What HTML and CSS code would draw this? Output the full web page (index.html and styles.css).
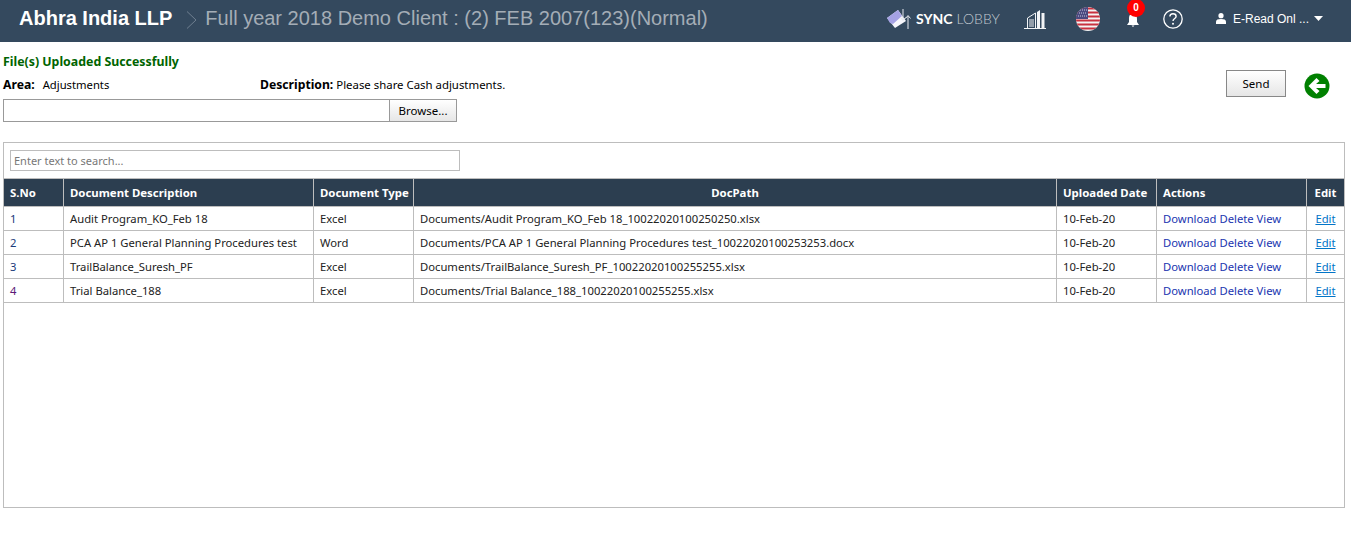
FILE: index.html
```html
<!DOCTYPE html>
<html lang="en">
<head>
<meta charset="utf-8">
<title>Documents</title>
<link rel="stylesheet" href="styles.css">
</head>
<body>
<header class="topbar">
  <div class="crumbs">
    <span class="firm">Abhra India LLP</span>
    <svg class="chev" width="12" height="20" viewBox="0 0 12 20"><path d="M1 1.500 L10 10 L1 18.500" fill="none" stroke="#6f7f90" stroke-width="1"/></svg>
    <span class="client">Full year 2018 Demo Client : (2) FEB 2007(123)(Normal)</span>
  </div>
  <div class="tools">
    <div class="sync">
      <svg width="26" height="20" viewBox="0 0 26 20"><path d="M0 9 L11 1 L19 12 L8 19 Z" fill="#f6f6fb"/><path d="M0 9 L11 1 L15 7 L6 15 L3 14 Z" fill="#a5a2e4"/><path d="M16 0 V11 M13.500 8.500 L16 11.500 L18.500 8.500 M21 20 V7 M18.500 9.500 L21 6.500 L23.500 9.500" fill="none" stroke="#e4e8ee" stroke-width="1"/></svg>
      <span class="sync-a">SYNC</span><span class="sync-b">LOBBY</span>
    </div>
    <svg class="city" width="24" height="20" viewBox="0 0 24 20"><g fill="none" stroke="#f2f4f6" stroke-width="1"><path d="M1 19.500 H23"/><path d="M4.500 19 V9 L12.500 4 V19"/><path d="M6 11 H11 M6 13 H11 M6 15 H11 M6 17 H11"/></g><path d="M14 3 L17 1 V19 H14 Z M18.500 4 H21.500 V19 H18.500 Z" fill="#f2f4f6"/></svg>
    <svg class="flag" width="24" height="24" viewBox="0 0 24 24"><defs><clipPath id="round"><circle cx="12" cy="12" r="12"/></clipPath></defs><g clip-path="url(#round)"><rect width="24" height="24" fill="#f4f4f4"/><path d="M0 1.500 H24 M0 5.500 H24 M0 9.500 H24 M0 13.500 H24 M0 17.500 H24 M0 21.500 H24" stroke="#c8313f" stroke-width="2"/><rect width="12" height="12" fill="#4a4a80"/><path d="M2 3 H11 M3 6 H11 M2 9 H11" stroke="#c9c9e0" stroke-width="1" stroke-dasharray="1 1"/></g></svg>
    <div class="bell">
      <svg width="14" height="14" viewBox="0 0 14 14"><path d="M7 0 C10 0 11 3 11 6 V9 L13 12 H1 L3 9 V6 C3 3 4 0 7 0 Z M5.500 12.500 H8.500 L7 14 Z" fill="#fff"/></svg>
      <span class="badge">0</span>
    </div>
    <svg class="help" width="20" height="20" viewBox="0 0 20 20"><circle cx="10" cy="10" r="9.200" fill="none" stroke="#fff" stroke-width="1.300"/><path d="M6.900 7.600 C6.900 5.800 8.300 4.800 10 4.800 C11.800 4.800 13.100 5.900 13.100 7.400 C13.100 9.400 10 9.600 10 12" fill="none" stroke="#fff" stroke-width="1.400"/><circle cx="10" cy="14.700" r="1" fill="#fff"/></svg>
    <div class="user">
      <svg width="10" height="11" viewBox="0 0 10 11"><circle cx="5" cy="2.700" r="2.600" fill="#fff"/><path d="M0 11 V8.500 C0 6.800 2 6 5 6 C8 6 10 6.800 10 8.500 V11 Z" fill="#fff"/></svg>
      <span>E-Read Onl ...</span>
      <svg width="9" height="5" viewBox="0 0 9 5"><path d="M0 0 H9 L4.500 5 Z" fill="#fff"/></svg>
    </div>
  </div>
</header>

<main class="page">
  <div class="upload">
    <div class="upload-left">
      <p class="success">File(s) Uploaded Successfully</p>
      <div class="meta">
        <div class="meta-area"><b>Area:</b><span class="gap">Adjustments</span></div>
        <div class="meta-desc"><b>Description:</b> Please share Cash adjustments.</div>
      </div>
      <div class="file">
        <div class="file-input"></div>
        <button class="browse" type="button">Browse...</button>
      </div>
    </div>
    <div class="upload-right">
      <button class="send" type="button">Send</button>
      <svg class="back" width="26" height="26" viewBox="0 0 26 26"><circle cx="13" cy="13" r="12.500" fill="#008000"/><path d="M4.500 13 L12.500 5 L15.500 8 L12 11 H21.500 V15 H12 L15.500 18 L12.500 21 Z" fill="#fff"/></svg>
    </div>
  </div>

  <section class="panel">
    <div class="search-row"><input class="search" type="text" placeholder="Enter text to search..."></div>
    <table class="grid">
      <colgroup>
        <col class="c1"><col class="c2"><col class="c3"><col class="c4"><col class="c5"><col class="c6"><col class="c7">
      </colgroup>
      <thead>
        <tr><th>S.No</th><th>Document Description</th><th>Document Type</th><th class="center">DocPath</th><th>Uploaded Date</th><th>Actions</th><th class="center">Edit</th></tr>
      </thead>
      <tbody>
        <tr><td class="num">1</td><td>Audit Program_KO_Feb 18</td><td>Excel</td><td>Documents/Audit Program_KO_Feb 18_10022020100250250.xlsx</td><td>10-Feb-20</td><td class="act">Download Delete View</td><td class="center"><a class="edit" href="#">Edit</a></td></tr>
        <tr><td class="num">2</td><td>PCA AP 1 General Planning Procedures test</td><td>Word</td><td>Documents/PCA AP 1 General Planning Procedures test_10022020100253253.docx</td><td>10-Feb-20</td><td class="act">Download Delete View</td><td class="center"><a class="edit" href="#">Edit</a></td></tr>
        <tr><td class="num">3</td><td>TrailBalance_Suresh_PF</td><td>Excel</td><td>Documents/TrailBalance_Suresh_PF_10022020100255255.xlsx</td><td>10-Feb-20</td><td class="act">Download Delete View</td><td class="center"><a class="edit" href="#">Edit</a></td></tr>
        <tr><td class="num last">4</td><td>Trial Balance_188</td><td>Excel</td><td>Documents/Trial Balance_188_10022020100255255.xlsx</td><td>10-Feb-20</td><td class="act">Download Delete View</td><td class="center"><a class="edit" href="#">Edit</a></td></tr>
      </tbody>
    </table>
  </section>
</main>
</body>
</html>
```
FILE: styles.css
```css
* { box-sizing: border-box; }
html, body { margin: 0; padding: 0; background: #fff; }
body { font-family: "Noto Sans", "Open Sans", sans-serif; font-size: 11.25px; color: #000; height: 545px; overflow: hidden; }

.topbar { height: 42px; padding-bottom: 5px; background: #34495e; display: flex; justify-content: space-between; align-items: center; font-family: "Liberation Sans", Arial, sans-serif; }
.crumbs { display: flex; align-items: center; padding-left: 19px; }
.firm { font-size: 20px; font-weight: bold; color: #fff; }
.chev { margin: 2px 7px 0 14px; }
.client { font-size: 20px; color: #a4adb6; }
.tools { display: flex; align-items: center; padding-right: 28px; }
.sync { display: flex; align-items: center; width: 113px; }
.sync-a { font-family: "Lato", sans-serif; font-weight: bold; font-size: 14px; color: #fff; margin-left: 3px; }
.sync-b { font-family: "Lato", sans-serif; font-size: 14px; color: #c2c9d1; margin-left: 4px; font-weight: 300; }
.city { margin-left: 23px; }
.flag { margin-left: 29px; }
.bell { position: relative; width: 14px; height: 14px; margin: 3px 0 0 26px; }
.bell svg { display: block; }
.badge { position: absolute; left: 1px; top: -14px; width: 18px; height: 18px; border-radius: 50%; background: #f00; color: #fff; font-size: 10px; font-weight: bold; text-align: center; line-height: 17px; }
.help { margin-left: 23px; }
.user { display: flex; align-items: center; margin-left: 33px; color: #fff; font-size: 12px; }
.user span { margin: 0 5px 0 7px; }

.page { padding: 0 6px 0 3px; }
.upload { display: flex; justify-content: space-between; height: 100px; }
.upload-left { width: 510px; }
.success { margin: 0; padding-top: 11px; height: 33px; line-height: 17px; font-size: 12.35px; font-weight: bold; color: #006400; }
.meta { display: flex; height: 24px; line-height: 19px; white-space: nowrap; }
.meta b { font-size: 12.2px; }
.meta-area { width: 257px; flex: none; }
.meta-desc { font-size: 11.4px; }
.gap { margin-left: 8px; }
.file { display: flex; height: 23px; }
.file-input { width: 386px; height: 23px; border: 1px solid #999; border-right: 0; background: #fff; }
.browse { width: 68px; height: 23px; padding: 0; border: 1px solid #999; background: linear-gradient(#fff, #e6e6e6); font: inherit; font-size: 11.5px; color: #000; }
.upload-right { display: flex; align-items: flex-start; padding-top: 28px; padding-right: 15px; }
.send { width: 60px; height: 27px; padding: 0; border: 1px solid #888; background: linear-gradient(#fff, #e6e6e6); font: inherit; font-size: 11.5px; color: #000; margin-right: 18px; }
.back { margin-top: 3px; }

.panel { height: 366px; border: 1px solid #bdbdbd; }
.search-row { padding: 7px 0 0 6px; height: 35px; }
.search { display: block; width: 450px; height: 21px; border: 1px solid #bdbdbd; padding: 0 3px; font: inherit; font-size: 11px; color: #555; outline: 0; }
.search::placeholder { color: #777; opacity: 1; }

.grid { width: 1341px; margin-left: -1px; table-layout: fixed; border-collapse: collapse; }
.c1 { width: 60px; } .c2 { width: 250px; } .c3 { width: 100px; } .c4 { width: 643px; } .c5 { width: 100px; } .c6 { width: 150px; } .c7 { width: 38px; }
.grid th, .grid td { border: 1px solid #bdbdbd; padding: 0 6px; text-align: left; white-space: nowrap; overflow: hidden; }
.grid th { height: 28px; background: #2c3e50; color: #fff; font-size: 11.4px; font-weight: bold; }
.grid td { height: 24px; color: #222; }
.grid th.center, .grid td.center { text-align: center; }
.grid td.num { color: #1a3a7a; }
.grid td.num.last { color: #5b1a78; }
.grid td.act { color: #1a35b0; }
.edit { color: #0275c8; text-decoration: underline; }
```
